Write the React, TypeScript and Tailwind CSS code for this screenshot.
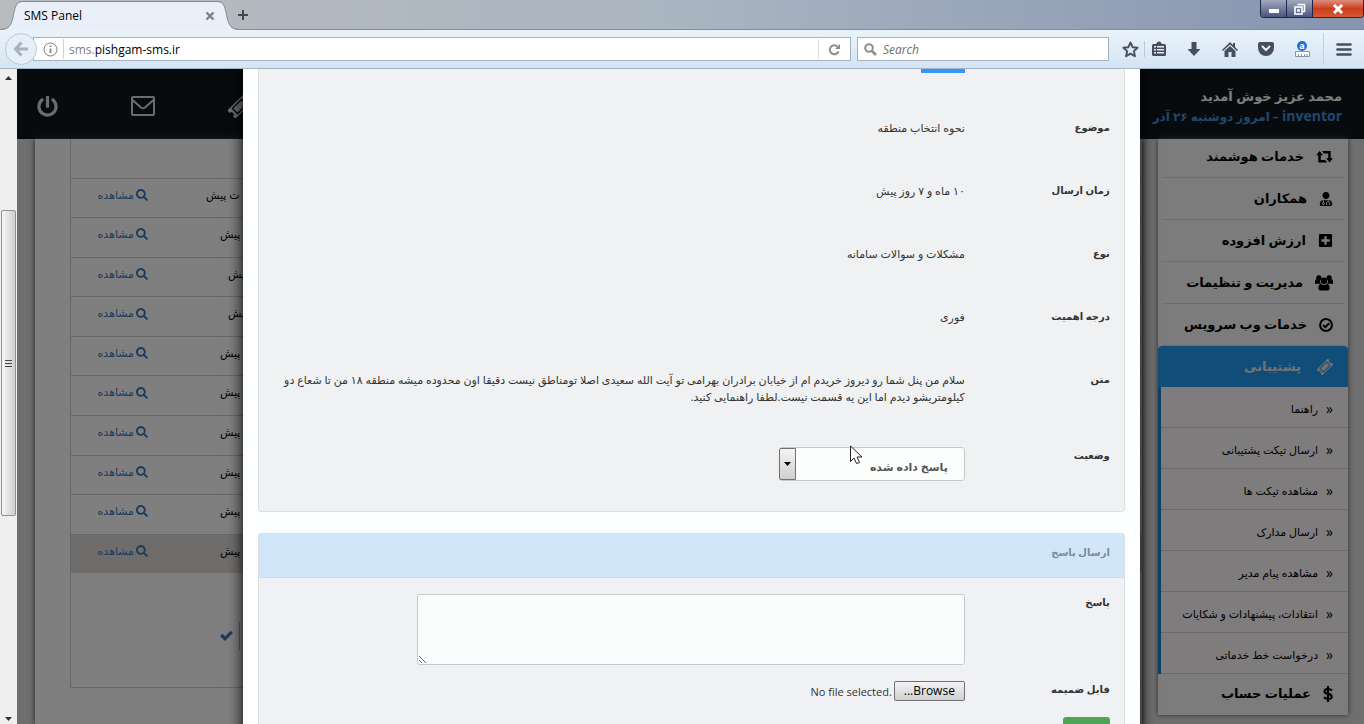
import type { ReactNode } from "react";
import { FaPlusSquare, FaPowerOff, FaSearch, FaUserMd } from "react-icons/fa";

function RetweetIcon() {
  return (
    <svg width="17" height="12" viewBox="0 0 17 12" fill="currentColor" className="shrink-0">
      <path d="M3.500 0L7 4.300H4.800V9H9.200L11 11.500H2.300V4.300H0Z" />
      <path d="M13.500 11.500L10 7.200H12.200V2.500H7.800L6 0H14.700V7.200H17Z" />
    </svg>
  );
}

function UsersIcon() {
  return (
    <svg width="18" height="16" viewBox="0 0 18 16" fill="currentColor" className="shrink-0">
      <circle cx="3.800" cy="2.800" r="2.600" />
      <circle cx="14.200" cy="2.800" r="2.600" />
      <path d="M0 9V6Q0 4.300 1.500 4.300L5 5.300Q4.500 8 6 8.700H1Q0 9 0 9ZM18 9V6Q18 4.300 16.500 4.300L13 5.300Q13.500 8 12 8.700H17Q18 9 18 9Z" />
      <circle cx="9" cy="5.800" r="3.300" />
      <path d="M3.300 13.500Q3.300 9 6 9Q9 11 12 9Q14.700 9 14.700 13.500Q14.700 15.500 12.500 15.500H5.500Q3.300 15.500 3.300 13.500Z" />
    </svg>
  );
}

function CheckCircleIcon() {
  return (
    <svg width="14" height="14" viewBox="0 0 14 14" fill="none" stroke="currentColor" strokeWidth="2" className="shrink-0">
      <circle cx="7" cy="7" r="5.900" />
      <path d="M4 7L6.300 9.200L10.200 5.200" />
    </svg>
  );
}

function TicketIcon({ size }: { size: number }) {
  return (
    <svg width={size} height={size} viewBox="0 0 24 24" className="shrink-0">
      <g transform="rotate(-45 12 12)">
        <path
          fill="currentColor"
          fillRule="evenodd"
          d="M0 6H24V9.500A2.500 2.500 0 0 0 24 14.500V18H0V14.500A2.500 2.500 0 0 0 0 9.500ZM4.500 7.500V16.500H19.500V7.500ZM6 9H18V15H6Z"
        />
      </g>
    </svg>
  );
}

const topMenu = [
  { label: "خدمات هوشمند", icon: <RetweetIcon /> },
  { label: "همکاران", icon: <FaUserMd size={14} /> },
  { label: "ارزش افزوده", icon: <FaPlusSquare size={15} /> },
  { label: "مدیریت و تنظیمات", icon: <UsersIcon /> },
  { label: "خدمات وب سرویس", icon: <CheckCircleIcon /> },
];

const supportMenu = [
  "راهنما",
  "ارسال تیکت پشتیبانی",
  "مشاهده تیکت ها",
  "ارسال مدارک",
  "مشاهده پیام مدیر",
  "انتقادات، پیشنهادات و شکایات",
  "درخواست خط خدماتی",
];

const tickets = [
  { age: "ت پیش", pad: "pl-[5px]" },
  { age: "پیش", pad: "pl-[19px]" },
  { age: "پیش", pad: "pl-[27px]" },
  { age: "پیش", pad: "pl-[27px]" },
  { age: "پیش", pad: "pl-[19px]" },
  { age: "پیش", pad: "pl-[19px]" },
  { age: "پیش", pad: "pl-[19px]" },
  { age: "پیش", pad: "pl-[19px]" },
  { age: "پیش", pad: "pl-[19px]" },
  { age: "پیش", pad: "pl-[19px]" },
];

function TitleBar() {
  return (
    <div className="flex h-[30px] shrink-0 items-end justify-between border-b border-[#7f8c99] bg-linear-to-r from-[#b9bbbe] via-[#a9b5c1] to-[#8794b0]">
      <div className="flex h-full items-end">
        <div className="-mb-px flex h-[29px] items-stretch">
          <svg width="22" height="29" viewBox="0 0 22 29" className="shrink-0">
            <path d="M0 29C9 29 11 25 13 16C15 6 16 1 22 1V29Z" fill="#e9eff8" />
            <path d="M0 28.5C9 28 11 25 13 16C15 6 16 1 22 .5" fill="none" stroke="#7f8c99" />
          </svg>
          <div className="flex w-[196px] items-center justify-between border-t border-[#7f8c99] bg-[#e9eff8] pl-0.5 pr-[3px] text-xs text-black">
            <span>SMS Panel</span>
            <button aria-label="Close tab" className="text-[#7b828b]">
              <svg width="10" height="10" viewBox="0 0 10 10" stroke="currentColor" strokeWidth="2.4">
                <path d="M1.500 1.500L8.500 8.500M8.500 1.500L1.500 8.500" />
              </svg>
            </button>
          </div>
          <svg width="22" height="29" viewBox="0 0 22 29" className="shrink-0">
            <path d="M22 29C13 29 11 25 9 16C7 6 6 1 0 1V29Z" fill="#e9eff8" />
            <path d="M22 28.5C13 28 11 25 9 16C7 6 6 1 0 .5" fill="none" stroke="#7f8c99" />
          </svg>
        </div>
        <button aria-label="New tab" className="-ml-0.5 flex h-[28px] w-3 items-center text-[#3f4750]">
          <svg width="10" height="10" viewBox="0 0 10 10" stroke="currentColor" strokeWidth="2">
            <path d="M5 0V10M0 5H10" />
          </svg>
        </button>
      </div>
      <div className="flex h-[18px] self-start overflow-hidden rounded-b border border-t-0 border-[#20284a] text-white">
        <button aria-label="Minimize" className="flex w-[26px] items-center justify-center border-r border-[#20284a] bg-linear-to-b from-[#a3a9c0] to-[#4d557f]">
          <span className="mt-1 h-1 w-2.5 bg-white"></span>
        </button>
        <button aria-label="Restore" className="flex w-[26px] items-center justify-center border-r border-[#20284a] bg-linear-to-b from-[#a3a9c0] to-[#4d557f]">
          <svg width="12" height="12" viewBox="0 0 12 12" fill="none" stroke="white" strokeWidth="1.600">
            <rect x="1" y="4" width="7" height="7" />
            <path d="M3.500 1.500H10.500V8.500H9" />
            <rect x="4" y="7" width="1" height="1" />
          </svg>
        </button>
        <button aria-label="Close" className="flex w-[50px] items-center justify-center bg-linear-to-b from-[#dd8d7c] via-[#cc3c1c] to-[#d55a31]">
          <svg width="12" height="10" viewBox="0 0 12 10" stroke="white" strokeWidth="3">
            <path d="M2 1L10 9M10 1L2 9" />
          </svg>
        </button>
      </div>
    </div>
  );
}

function ToolButton({ label, children }: { label: string; children: ReactNode }) {
  return (
    <button aria-label={label} className="flex w-9 items-center justify-center text-[#464f5a]">
      {children}
    </button>
  );
}

function NavBar() {
  return (
    <div className="flex h-[39px] shrink-0 items-center border-b border-[#a5b5c5] bg-linear-to-b from-[#eaf3fa] to-[#d5e4f3] pl-[5px]">
      <button aria-label="Back" className="z-10 flex size-8 shrink-0 items-center justify-center rounded-full border border-[#bccad8] bg-[#e6eff8] text-[#a5b2bf]">
        <svg width="16" height="16" viewBox="0 0 16 16" fill="none" stroke="currentColor" strokeWidth="3">
          <path d="M8.500 1.500L2.500 8L8.500 14.500M3 8H15" />
        </svg>
      </button>
      <div className="-ml-1 flex h-[24px] flex-1 items-center border border-[#a3b3c2] bg-white pl-[9px]">
        <svg width="15" height="15" viewBox="0 0 15 15" fill="none" stroke="#858585" className="shrink-0">
          <circle cx="7.500" cy="7.500" r="6.500" />
          <path d="M7.500 6.500V11M7.500 3.500V5" strokeWidth="1.800" />
        </svg>
        <span className="mx-[5px] h-5 border-r border-[#d4d4d4]"></span>
        <div className="pt-0.5 text-xs text-black">
          <span className="text-[#808080]">sms.</span>pishgam-sms.ir
        </div>
        <button aria-label="Reload" className="ml-auto flex h-5 w-8 items-center justify-center border-l border-[#dedede] text-[#8c8c8c]">
          <svg width="13" height="13" viewBox="0 0 13 13" fill="none" stroke="currentColor" strokeWidth="2">
            <path d="M10.500 8.500A4.500 4.500 0 1 1 9.500 3.500" />
            <path d="M7 6H12V1Z" fill="currentColor" stroke="none" />
          </svg>
        </button>
      </div>
      <label className="ml-1.5 flex h-[24px] w-[252px] items-center gap-1.5 border border-[#a3b3c2] bg-white pl-1.5">
        <svg width="13" height="13" viewBox="0 0 13 13" fill="none" stroke="#8e8e8e" strokeWidth="2" className="shrink-0">
          <circle cx="5" cy="5" r="3.800" />
          <path d="M8 8L12 12" strokeWidth="2.500" />
        </svg>
        <input type="text" placeholder="Search" aria-label="Search" className="w-full pt-0.5 text-xs italic outline-none placeholder:text-[#707070]" />
      </label>
      <div className="flex h-full items-center pl-[3px]">
        <ToolButton label="Bookmark">
          <svg width="17" height="17" viewBox="0 0 17 17" fill="none" stroke="currentColor" strokeWidth="1.900" strokeLinejoin="round">
            <path d="M8.500 1.500L10.600 6.200L15.600 6.700L11.900 10.100L12.900 15.200L8.500 12.600L4.100 15.200L5.100 10.100L1.400 6.700L6.400 6.200Z" />
          </svg>
        </ToolButton>
        <div className="-ml-1 flex h-4 w-8 border-l border-[#bcc8d4]">
          <ToolButton label="Reading list">
            <svg width="14" height="16" viewBox="0 0 14 16" fill="currentColor" className="-ml-1">
              <path fillRule="evenodd" d="M1.500 3H4L5.500 1Q7 0 8.500 1L10 3H12.500Q14 3 14 4.500V13.500Q14 15 12.500 15H1.500Q0 15 0 13.500V4.500Q0 3 1.500 3ZM2 5V6.500H4V5ZM5 5V6.500H12V5ZM2 8V9.500H4V8ZM5 8V9.500H12V8ZM2 11V12.500H4V11ZM5 11V12.500H12V11Z" />
            </svg>
          </ToolButton>
        </div>
        <div className="flex">
          <ToolButton label="Downloads">
            <svg width="14" height="15" viewBox="0 0 14 15" fill="currentColor">
              <path d="M4.500 0H9.500V7H13.500L7 14L.5 7H4.500Z" />
            </svg>
          </ToolButton>
          <ToolButton label="Home">
            <svg width="16" height="15" viewBox="0 0 16 15" fill="currentColor">
              <path d="M8 0L11 3V1H13V5L16 8L15 9L8 2.500L1 9L0 8Z" />
              <path d="M8 4L13.500 9V15H9.500V10H6.500V15H2.500V9Z" />
            </svg>
          </ToolButton>
          <ToolButton label="Pocket">
            <svg width="16" height="14" viewBox="0 0 16 14">
              <path d="M2 0H14Q16 0 16 2V6A8 8 0 0 1 0 6V2Q0 0 2 0Z" fill="currentColor" />
              <path d="M4.500 4.500L8 8L11.500 4.500" fill="none" stroke="#e6eff8" strokeWidth="2" strokeLinecap="round" />
            </svg>
          </ToolButton>
          <ToolButton label="Alexa">
            <span className="flex flex-col items-center">
              <span className="size-2.5 rounded-full bg-[#1a74d8] text-center text-[9px] leading-[9px] font-bold text-white">a</span>
              <svg width="15" height="6" viewBox="0 0 15 6" fill="white" stroke="#8b949d">
                <path d="M.5 .5H14.500V5.500H.5ZM3.500 3V5M6.500 3V5M9.500 3V5M12 3V5" />
              </svg>
            </span>
          </ToolButton>
        </div>
        <div className="ml-[3px] flex h-8 border-l border-[#c3d0dc]">
          <button aria-label="Menu" className="flex w-10 items-center justify-center text-[#464f5a]">
            <svg width="16" height="13" viewBox="0 0 16 13" stroke="currentColor" strokeWidth="2.600" strokeLinecap="round">
              <path d="M1.500 1.500H14.500M1.500 6.500H14.500M1.500 11.500H14.500" />
            </svg>
          </button>
        </div>
      </div>
    </div>
  );
}

function ScrollBar() {
  return (
    <div className="flex w-[17px] shrink-0 flex-col items-center bg-[#efefef] pt-[7px] pb-[3px]">
      <svg width="7" height="4" viewBox="0 0 7 4">
        <path d="M0 4L3.500 0L7 4Z" fill="#333" />
      </svg>
      <div className="mt-[130px] flex h-[306px] w-[15px] flex-col items-center justify-center gap-[2px] rounded-xs border border-[#8f8f8f] bg-linear-to-r from-[#f6f6f6] to-[#cfcfcf]">
        <span className="h-px w-[7px] bg-[#444]"></span>
        <span className="h-px w-[7px] bg-[#444]"></span>
        <span className="h-px w-[7px] bg-[#444]"></span>
      </div>
      <svg width="7" height="4" viewBox="0 0 7 4" className="mt-auto">
        <path d="M0 0L3.500 4L7 0Z" fill="#333" />
      </svg>
    </div>
  );
}

function PageHeader() {
  return (
    <header className="flex h-[70px] shrink-0 items-center justify-between bg-[#11171d] pr-[22px] pl-5">
      <div className="pt-1 text-xs leading-5 font-bold">
        <p className="text-[13px] text-white">محمد عزیز خوش آمدید</p>
        <p className="text-[#438edb]">
          <span className="text-sm">inventor</span> – امروز دوشنبه ۲۶ آذر
        </p>
      </div>
      <nav dir="ltr" className="flex items-center gap-[73px] pt-1 text-[#d8d8d8]">
        <a href="#logout" aria-label="خروج">
          <FaPowerOff size={21} />
        </a>
        <a href="#inbox" aria-label="پیام ها">
          <svg width="24" height="20" viewBox="0 0 24 20" fill="none" stroke="currentColor" strokeWidth="2">
            <rect x="1" y="1" width="22" height="18" rx="1" />
            <path d="M1.500 4L10 11.500Q12 13 14 11.500L22.500 4" />
          </svg>
        </a>
        <a href="#tickets" aria-label="تیکت ها">
          <TicketIcon size={23} />
        </a>
      </nav>
    </header>
  );
}

function Sidebar() {
  return (
    <aside className="w-[190px] shrink-0 self-start bg-[#f8f8f8] pb-px shadow-[0_0_5px_#555]">
      <ul className="-mt-[3px]">
        {topMenu.map((item) => (
          <li key={item.label} className="mx-1 border-b border-[#dcdcdc]">
            <a href="#menu" className="flex h-[41px] items-center gap-3 pr-[11px] text-[13px] font-bold text-black">
              {item.icon}
              {item.label}
            </a>
          </li>
        ))}
      </ul>
      <a href="#support" className="flex h-[41px] items-center gap-4 rounded-t-sm bg-[#209af0] pr-[15px] text-[13px] font-bold text-[#e4e4e4]">
        <TicketIcon size={16} />
        پشتیبانی
      </a>
      <ul className="border-l-3 border-[#2080c8] bg-[#fdf8f8]">
        {supportMenu.map((label) => (
          <li key={label} className="border-b border-[#d8d4d4]">
            <a href="#support" className="flex h-10 items-center gap-2 pt-1 pr-[15px] text-[11px] text-black">
              <span className="text-sm">«</span>
              {label}
            </a>
          </li>
        ))}
      </ul>
      <a href="#account" className="flex h-10 items-center gap-3 pr-[15px] text-[13px] font-bold text-black">
        <svg width="10" height="16" viewBox="0 0 10 16" fill="none" stroke="currentColor" strokeWidth="2.200">
          <path d="M9 4.500Q7.500 3 5 3Q1.500 3 1.500 5.300Q1.500 7.300 5 7.900Q8.700 8.500 8.700 10.700Q8.700 13 5 13Q2.500 13 1 11.300M5 0V16" />
        </svg>
        عملیات حساب
      </a>
    </aside>
  );
}

function TicketTable() {
  return (
    <main className="min-w-0 flex-1 bg-white pl-[35px] shadow-[0_0_6px_#444]">
      <div className="h-[549px] border-b border-l border-[#cfcfcf]">
        <table className="h-[434px] w-full table-fixed text-[11px]">
          <thead>
            <tr className="h-[39px] border-b border-[#cfcfcf]">
              <th></th>
              <th className="w-[130px]"></th>
            </tr>
          </thead>
          <tbody>
            {tickets.map((ticket, i) => (
              <tr key={i} className="border-b border-[#cfcfcf] last:border-0 last:bg-[#dedbd8]">
                <td className={`${ticket.pad} pb-1.5 text-left text-black`}>{ticket.age}</td>
                <td className="pr-[53px] pb-1.5">
                  <a href="#ticket" className="flex items-center gap-[2px] whitespace-nowrap text-[#3f78b4]">
                    <FaSearch size={12} className="shrink-0" />
                    مشاهده
                  </a>
                </td>
              </tr>
            ))}
          </tbody>
        </table>
        <div className="flex h-[115px] items-center justify-end gap-1.5 pt-2.5 pl-[149px]">
          <span className="h-7 border-l border-[#bbb]"></span>
          <svg width="13" height="11" viewBox="0 0 13 11" fill="none" stroke="#3f78b4" strokeWidth="3.200">
            <path d="M1.200 5L5 8.700L11.800 1.800" />
          </svg>
        </div>
      </div>
    </main>
  );
}

function Row({ label, htmlFor, children }: { label: string; htmlFor?: string; children: ReactNode }) {
  return (
    <div className="flex">
      <label htmlFor={htmlFor} className="w-[145px] shrink-0 self-start text-[10px] leading-[17px] font-bold">
        {label}
      </label>
      <div>{children}</div>
    </div>
  );
}

function TicketDialog() {
  return (
    <div role="dialog" aria-label="تیکت" className="relative mx-auto -mt-[37px] w-2/3 bg-[#fdfefe] px-[15px] text-[11px] leading-[17px] text-[#333] shadow-[0_0_14px_#000]">
      <section className="flex flex-col gap-[46px] rounded-b-[3px] border border-[#dcdfe0] bg-[#eff1f2] px-[14px] pt-[23px] pb-[30px]">
        <Row label="شناسه">
          <span className="block w-11 bg-[#3396f5] text-center text-white">۴۱۵۶۷</span>
        </Row>
        <Row label="موضوع">نحوه انتخاب منطقه</Row>
        <Row label="زمان ارسال">۱۰ ماه و ۷ روز پیش</Row>
        <Row label="نوع">مشکلات و سوالات سامانه</Row>
        <Row label="درجه اهمیت">فوری</Row>
        <Row label="متن">
          <p className="whitespace-nowrap">
            سلام من پنل شما رو دیروز خریدم ام از خیابان برادران بهرامی تو آیت الله سعیدی اصلا تومناطق نیست دقیقا اون محدوده میشه منطقه ۱۸ من تا شعاع دو
            <br />
            کیلومتریشو دیدم اما این یه قسمت نیست.لطفا راهنمایی کنید.
          </p>
        </Row>
        <div className="-mt-1 flex">
          <label htmlFor="status" className="w-[145px] shrink-0 text-[10px] leading-[17px] font-bold">
            وضعیت
          </label>
          <div className="relative w-[186px]">
            <select id="status" className="h-[34px] w-full appearance-none rounded-[3px] border border-[#c5c9ca] bg-[#fcfdfd] pt-1 pr-4 text-[11px] font-bold text-[#555]">
              <option>پاسخ داده شده</option>
            </select>
            <span className="pointer-events-none absolute top-px left-0 flex h-8 w-[17px] items-center justify-center rounded-l-xs border border-[#707070] bg-linear-to-b from-[#f4f4f4] to-[#cfcfcf]">
              <svg width="7" height="4" viewBox="0 0 7 4">
                <path d="M0 0H7L3.500 4Z" fill="black" />
              </svg>
            </span>
            <svg width="13" height="20" viewBox="0 0 13 20" className="pointer-events-none absolute -top-0.5 left-[71px]">
              <path d="M.5 1V16.500L4 13L6.500 18.500L9.500 17.500L7 12H12Z" fill="white" stroke="#222" />
            </svg>
          </div>
        </div>
      </section>

      <section className="mt-[21px] rounded-t-[3px] border border-[#dcdfe0] bg-[#eff1f4]">
        <h2 className="h-11 border-b border-[#cfdae2] bg-[#d1e7f9] px-[14px] pt-2.5 text-[10px] font-bold text-[#7d8b9b]">ارسال پاسخ</h2>
        <div className="flex flex-col gap-4 px-[14px] pt-4">
          <Row label="پاسخ" htmlFor="reply">
            <textarea id="reply" className="block h-[71px] w-[548px] rounded-[3px] border border-[#c5c9ca] bg-[#fbfdfc]"></textarea>
          </Row>
          <Row label="فایل ضمیمه" htmlFor="attachment">
            <label htmlFor="attachment" className="flex items-center gap-[2px] font-['Open_Sans','Noto_Sans',sans-serif] text-[11px]">
              <span className="h-5 w-[71px] rounded-xs border border-[#707070] bg-linear-to-b from-[#f4f4f4] to-[#d0d0d0] text-center text-xs leading-[18px] text-black">Browse...</span>
              <span dir="ltr">No file selected.</span>
            </label>
            <input id="attachment" type="file" className="sr-only" />
          </Row>
          <button aria-label="ارسال" className="h-8 w-[47px] rounded-[3px] bg-[#4fa556]"></button>
        </div>
      </section>
    </div>
  );
}

export default function App() {
  return (
    <div className="flex h-screen flex-col overflow-hidden font-['Open_Sans','Noto_Sans',sans-serif]">
      <TitleBar />
      <NavBar />
      <div className="flex min-h-0 flex-1">
        <ScrollBar />
        <div dir="rtl" className="relative min-w-0 flex-1 overflow-hidden bg-[#dedede] font-['Open_Sans','DejaVu_Sans',sans-serif]">
          <div className="flex h-full flex-col">
            <PageHeader />
            <div className="flex min-h-0 flex-1 gap-4 pr-4 pl-[18px]">
              <Sidebar />
              <TicketTable />
            </div>
          </div>
          {/* dimmed backdrop with the open ticket on top */}
          <div className="absolute inset-0 overflow-hidden bg-black/50 pl-0.5">
            <TicketDialog />
          </div>
        </div>
      </div>
    </div>
  );
}
